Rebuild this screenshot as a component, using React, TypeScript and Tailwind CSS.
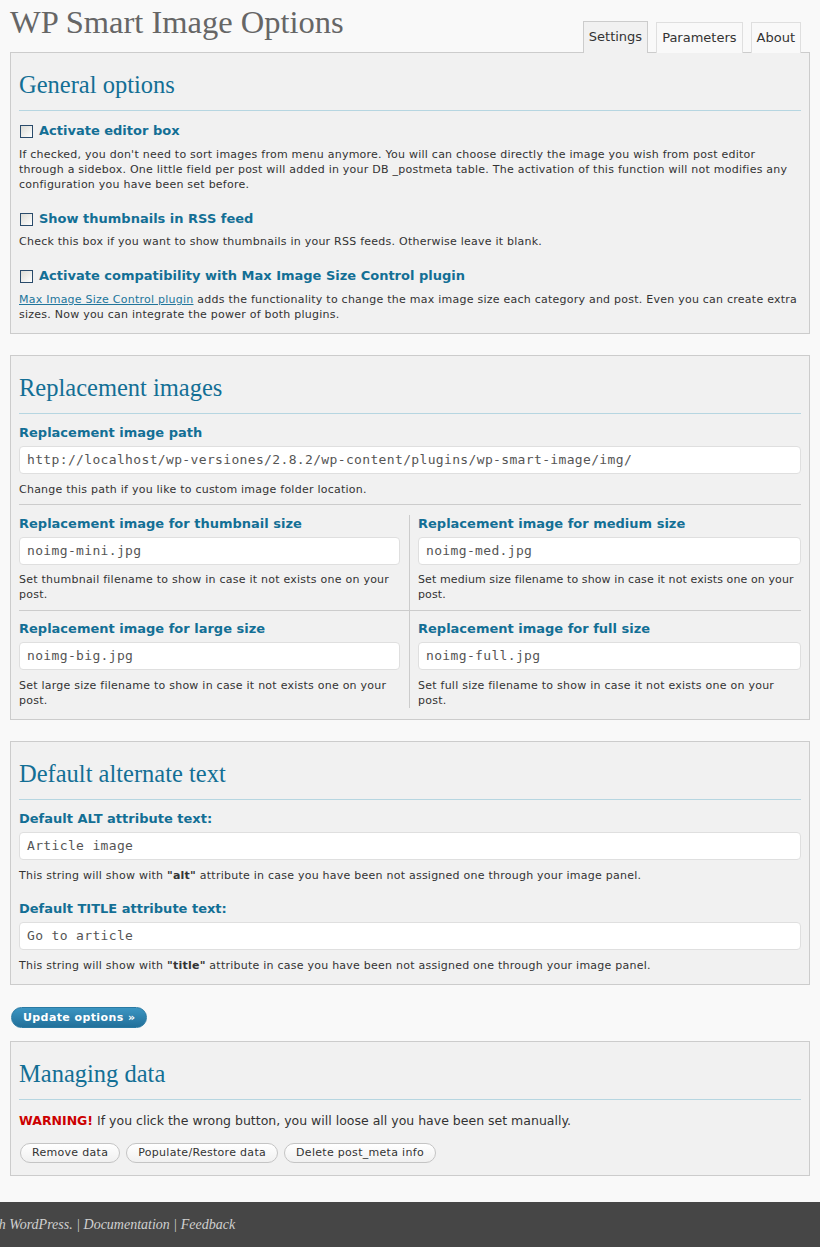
import React from "react";

const sans = "font-['Verdana','DejaVu_Sans',sans-serif]";
const serif = "font-['Georgia','Liberation_Serif',serif]";
const mono = "font-['Consolas','DejaVu_Sans_Mono',monospace]";

function Heading({ children }: { children: React.ReactNode }) {
  return (
    <>
      <h3 className={`${serif} h-[32px] leading-[32px] text-[24.5px] text-[#136f95] mt-[16px]`}>{children}</h3>
      <div className="mt-[9px] h-px bg-[#b6d6e1]" />
    </>
  );
}

function Label({ children }: { children: React.ReactNode }) {
  return <div className={`${sans} text-[13px] leading-[18px] font-bold text-[#136f95]`}>{children}</div>;
}

function Input({ value }: { value: string }) {
  return (
    <div
      className={`${mono} mt-[4px] h-[28px] leading-[26px] bg-white border border-[#dfdfdf] rounded-[4px] pl-[7px] text-[13px] tracking-[0.35px] text-[#555]`}
    >
      {value}
    </div>
  );
}

function Desc({ children, className = "", tight = false }: { children: React.ReactNode; className?: string; tight?: boolean }) {
  return (
    <p className={`${sans} text-[11px] leading-[15px] ${tight ? "tracking-[0.1px]" : "tracking-[0.24px]"} text-[#333] ${className}`}>
      {children}
    </p>
  );
}

function CheckLabel({ children }: { children: React.ReactNode }) {
  return (
    <div className="flex items-center gap-[6px]">
      <span className="ml-[1px] w-[13px] h-[13px] border border-[#2a4b6b] bg-gradient-to-br from-[#dcdcd6] to-white" />
      <Label>{children}</Label>
    </div>
  );
}

function Panel({ children, className = "" }: { children: React.ReactNode; className?: string }) {
  return <div className={`border border-[#ccc] bg-[#f1f1f1] px-[8px] ${className}`}>{children}</div>;
}

const tabBase = "px-[5px] border border-b-0 text-[13px] leading-[30px] text-[#333]";

export default function App() {
  return (
    <div className={`${sans} min-h-screen bg-[#f9f9f9] text-[#333]`}>
      <div className="px-[10px]">
        {/* Title + tabs */}
        <div className="flex items-end justify-between h-[52px]">
          <h2 className={`${serif} self-start mt-[3px] text-[32.5px] leading-[38px] text-[#666]`}>WP Smart Image Options</h2>
          <div className="flex items-end gap-[8px] mr-[9px] mb-[-1px]">
            <div className={`${tabBase} h-[32px] border-[#ccc] bg-[#f1f1f1]`}>Settings</div>
            <div className={`${tabBase} h-[31px] border-[#dfdfdf] bg-[#f9f9f9]`}>Parameters</div>
            <div className={`${tabBase} h-[31px] border-[#dfdfdf] bg-[#f9f9f9]`}>About</div>
          </div>
        </div>

        {/* General options */}
        <Panel className="pb-[11px]">
          <Heading>General options</Heading>
          <div className="mt-[11px]">
            <CheckLabel>Activate editor box</CheckLabel>
          </div>
          <Desc className="mt-[7px]">
            If checked, you don't need to sort images from menu anymore. You will can choose directly the image you wish from post editor
            through a sidebox. One little field per post will added in your DB _postmeta table. The activation of this function will not modifies any
            configuration you have been set before.
          </Desc>
          <div className="mt-[18px]">
            <CheckLabel>Show thumbnails in RSS feed</CheckLabel>
          </div>
          <Desc className="mt-[6px]">
            Check this box if you want to show thumbnails in your RSS feeds. Otherwise leave it blank.
          </Desc>
          <div className="mt-[18px]">
            <CheckLabel>Activate compatibility with Max Image Size Control plugin</CheckLabel>
          </div>
          <Desc className="mt-[7px]">
            <a className="text-[#21759b] underline">Max Image Size Control plugin</a> adds the functionality to change the max image size each category and post. Even you can create extra
            sizes. Now you can integrate the power of both plugins.
          </Desc>
        </Panel>

        {/* Replacement images */}
        <Panel className="mt-[21px] pb-[11px]">
          <Heading>Replacement images</Heading>
          <div className="mt-[10px]">
            <Label>Replacement image path</Label>
          </div>
          <Input value="http://localhost/wp-versiones/2.8.2/wp-content/plugins/wp-smart-image/img/" />
          <Desc className="mt-[8px]">Change this path if you like to custom image folder location.</Desc>
          <div className="mt-[7px] h-px bg-[#ccc]" />
          <div className="mt-[10px] grid grid-cols-[391px_1fr] border-b border-[#ccc]">
            <div className="border-r border-[#ccc] pr-[9px] pb-[8px]">
              <Label>Replacement image for thumbnail size</Label>
              <Input value="noimg-mini.jpg" />
              <Desc className="mt-[7px]">Set thumbnail filename to show in case it not exists one on your post.</Desc>
            </div>
            <div className="pl-[8px] pb-[8px]">
              <Label>Replacement image for medium size</Label>
              <Input value="noimg-med.jpg" />
              <Desc className="mt-[7px] mr-[-4px]" tight>
                Set medium size filename to show in case it not exists one on your post.
              </Desc>
            </div>
          </div>
          <div className="grid grid-cols-[391px_1fr]">
            <div className="border-r border-[#ccc] pr-[9px] pt-[9px]">
              <Label>Replacement image for large size</Label>
              <Input value="noimg-big.jpg" />
              <Desc className="mt-[8px]">Set large size filename to show in case it not exists one on your post.</Desc>
            </div>
            <div className="pl-[8px] pt-[9px] pr-[20px]">
              <Label>Replacement image for full size</Label>
              <div className="mr-[-20px]">
                <Input value="noimg-full.jpg" />
              </div>
              <Desc className="mt-[8px]">Set full size filename to show in case it not exists one on your post.</Desc>
            </div>
          </div>
        </Panel>

        {/* Default alternate text */}
        <Panel className="mt-[21px] pb-[11px]">
          <Heading>Default alternate text</Heading>
          <div className="mt-[10px]">
            <Label>Default ALT attribute text:</Label>
          </div>
          <Input value="Article image" />
          <Desc className="mt-[8px]">
            This string will show with <b>"alt"</b> attribute in case you have been not assigned one through your image panel.
          </Desc>
          <div className="mt-[17px]">
            <Label>Default TITLE attribute text:</Label>
          </div>
          <Input value="Go to article" />
          <Desc className="mt-[8px]">
            This string will show with <b>"title"</b> attribute in case you have been not assigned one through your image panel.
          </Desc>
        </Panel>

        {/* Update button */}
        <button className="mt-[22px] ml-px h-[21px] px-[11px] rounded-full border border-[#2a7aa3] bg-gradient-to-b from-[#3b95c2] to-[#22709a] text-white text-[11px] font-bold tracking-[0.4px] leading-[19px]">
          Update options »
        </button>

        {/* Managing data */}
        <Panel className="mt-[13px] pb-[12px]">
          <Heading>Managing data</Heading>
          <p className="mt-[12px] text-[12.5px] leading-[18px] text-[#333]">
            <b className="text-[#cc0000]">WARNING!</b> If you click the wrong button, you will loose all you have been set manually.
          </p>
          <div className="mt-[13px] flex gap-[6px] ml-px">
            {["Remove data", "Populate/Restore data", "Delete post_meta info"].map((t) => (
              <button
                key={t}
                className="h-[20px] px-[11px] rounded-full border border-[#c4c4c4] bg-gradient-to-b from-white to-[#f0f0f0] text-[11px] tracking-[0.3px] leading-[18px] text-[#333]"
              >
                {t}
              </button>
            ))}
          </div>
        </Panel>
      </div>

      {/* Footer */}
      <div className="mt-[26px] h-[45px] bg-[#464646] overflow-hidden">
        <p className={`${serif} italic text-[14px] leading-[45px] text-[#d0d0d0] whitespace-nowrap ml-[-150px]`}>
          Thank you for creating with WordPress. | Documentation | Feedback
        </p>
      </div>
    </div>
  );
}
